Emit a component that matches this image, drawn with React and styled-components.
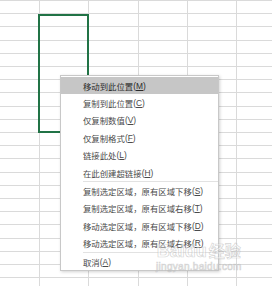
import styled, { createGlobalStyle } from 'styled-components';

const GlobalStyle = createGlobalStyle`
  html, body {
    margin: 0;
    padding: 0;
    background: #ffffff;
  }
  body {
    font-family: "Liberation Sans", "Noto Sans CJK SC", sans-serif;
  }
`;

const Page = styled.div`
  position: relative;
  width: 272px;
  height: 286px;
  overflow: hidden;
  background: #ffffff;
`;

const Sheet = styled.div`
  display: grid;
  grid-template-columns: 49px 49px 50px 49px 49px 49px;
  grid-template-rows: ${(p) => p.$rows};
  margin-left: -9px;
  margin-top: -13px;
`;

const Cell = styled.div`
  box-sizing: border-box;
  border-right: 1px solid #dadada;
  border-bottom: 1px solid #dadada;
`;

const Selection = styled.div`
  position: absolute;
  left: 38px;
  top: 14px;
  width: 51px;
  height: 119px;
  box-sizing: border-box;
  border: 2px solid #217346;
`;

const Menu = styled.ul`
  position: absolute;
  left: 60px;
  top: 75px;
  width: 159px;
  box-sizing: border-box;
  margin: 0;
  padding: 1px 0 0;
  list-style: none;
  background: #ffffff;
  border: 1px solid #c8c8c8;
  box-shadow: 1px 1px 3px rgba(0, 0, 0, 0.18);
`;

const Item = styled.li`
  height: 17.4px;
  padding-left: 22px;
  display: flex;
  align-items: center;
  font-family: "Noto Sans CJK SC", "Liberation Sans", sans-serif;
  font-size: 8.4px;
  color: ${(p) => (p.$active ? '#2b2b2b' : '#4a4a4a')};
  background: ${(p) => (p.$active ? '#c6c6c6' : 'transparent')};
  white-space: nowrap;

  & u {
    text-underline-offset: 1px;
  }
`;

const Key = styled.span`
  font-family: "Liberation Sans", sans-serif;
`;

const Separator = styled.li`
  height: 1px;
  margin-left: 22px;
  background: #e2e2e2;
`;

const Watermark = styled.div`
  position: absolute;
  left: 156px;
  top: 240px;
  display: flex;
  flex-direction: column;
  align-items: center;
  color: rgba(255, 255, 255, 0.45);
  -webkit-text-stroke: 0.7px rgba(170, 170, 170, 0.5);
  pointer-events: none;
`;

const MarkTitle = styled.div`
  display: flex;
  align-items: baseline;
  gap: 2px;
  font-family: "Liberation Sans", sans-serif;
  font-weight: bold;
  font-size: 18px;
  line-height: 20px;

  & span {
    font-family: "Noto Sans CJK SC", sans-serif;
    font-size: 16px;
  }
`;

const MarkUrl = styled.div`
  font-family: "Liberation Sans", sans-serif;
  font-size: 10px;
  line-height: 12px;
  letter-spacing: 0.3px;
`;

const lines = Array.from({ length: 23 }, (_, k) => Math.round(13.2 * k));
const rowHeights = ['14px', ...lines.slice(1).map((v, i) => `${v - lines[i]}px`)].join(' ');

const groups = [
  [
    ['移动到此位置', 'M', true],
    ['复制到此位置', 'C'],
    ['仅复制数值', 'V'],
    ['仅复制格式', 'F'],
    ['链接此处', 'L'],
    ['在此创建超链接', 'H'],
  ],
  [
    ['复制选定区域，原有区域下移', 'S'],
    ['复制选定区域，原有区域右移', 'T'],
    ['移动选定区域，原有区域下移', 'D'],
    ['移动选定区域，原有区域右移', 'R'],
  ],
  [['取消', 'A']],
];

const App = () => {
  const cells = Array.from({ length: 23 * 6 });

  return (
    <>
      <GlobalStyle />
      <Page>
        <Sheet $rows={rowHeights}>
          {cells.map((_, i) => (
            <Cell key={i} />
          ))}
        </Sheet>

        <Selection />

        <Menu>
          {groups.map((group, g) => [
            g > 0 && <Separator key={`sep-${g}`} />,
            ...group.map(([label, key, active]) => (
              <Item key={key} $active={active}>
                {label}
                <Key>
                  (<u>{key}</u>)
                </Key>
              </Item>
            )),
          ])}
        </Menu>

        <Watermark>
          <MarkTitle>
            Baidu<span>经验</span>
          </MarkTitle>
          <MarkUrl>jingyan.baidu.com</MarkUrl>
        </Watermark>
      </Page>
    </>
  );
};

export default App;
